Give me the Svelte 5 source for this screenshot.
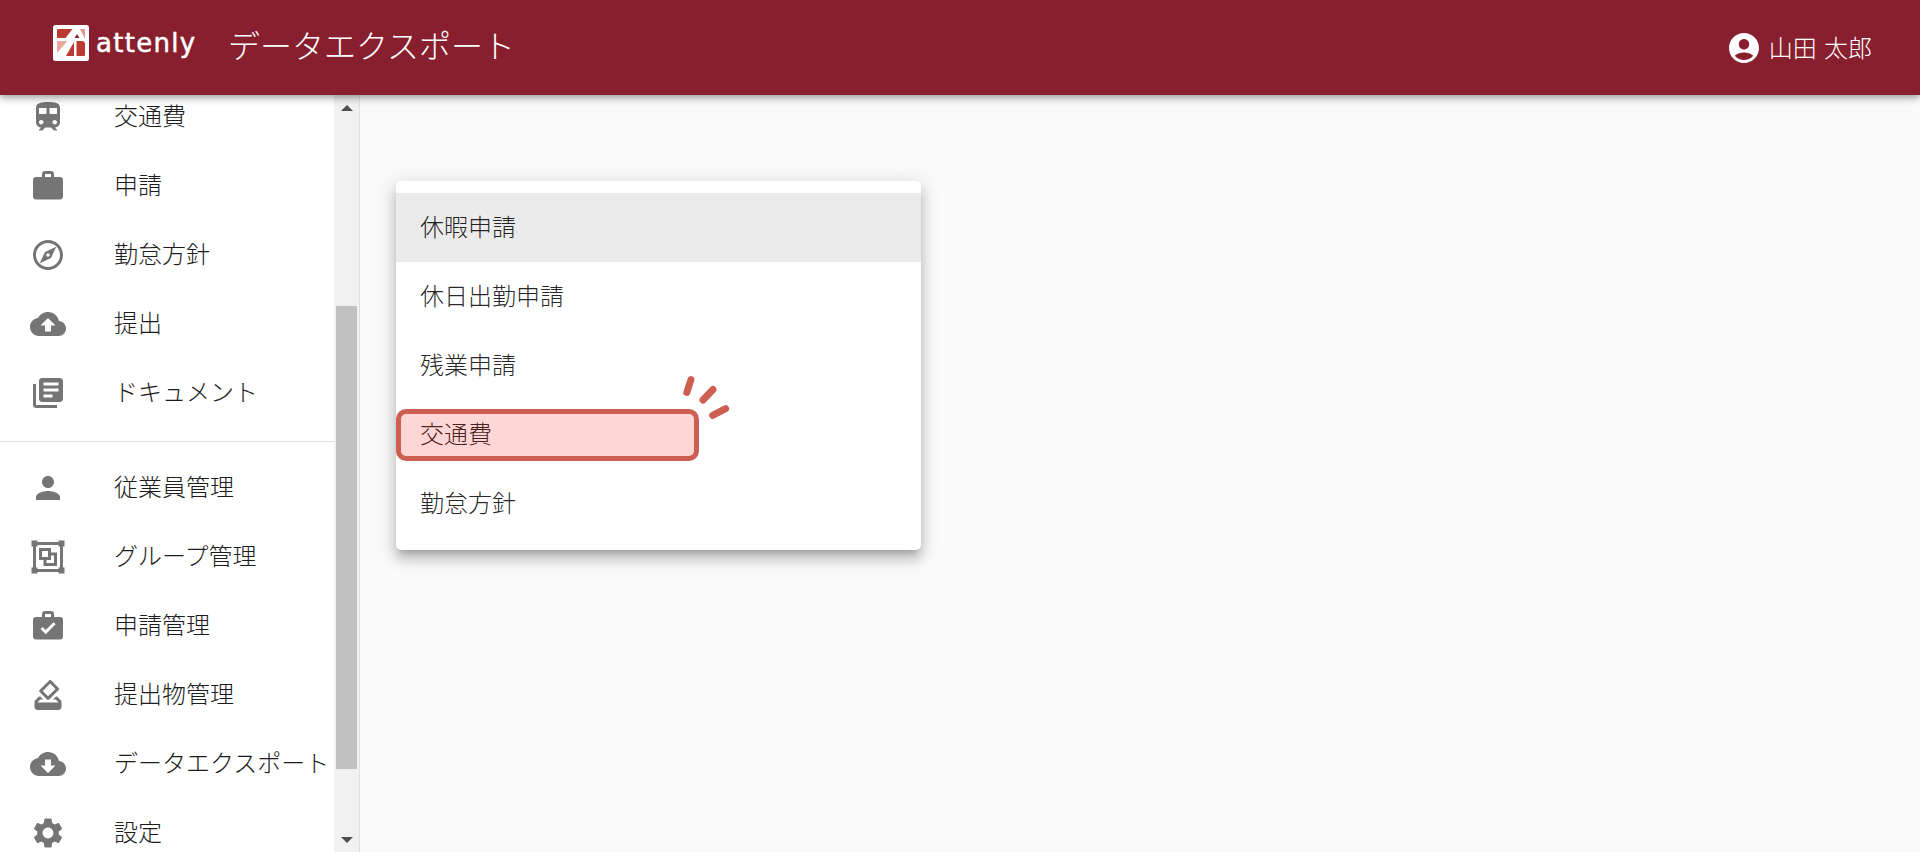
<script lang="ts">
	const topItems = [
		{ label: '交通費', d: 'M12 2c-4 0-8 .5-8 4v9.5C4 17.43 5.57 19 7.5 19L6 20.5v.5h2.23l2-2H14l2 2h2v-.5L16.5 19c1.93 0 3.5-1.57 3.5-3.5V6c0-3.5-3.58-4-8-4zM7.5 17c-.83 0-1.5-.67-1.5-1.5S6.67 14 7.5 14s1.5.67 1.5 1.5S8.33 17 7.5 17zm3.5-7H6V6h5v4zm2 0V6h5v4h-5zm3.5 7c-.83 0-1.5-.67-1.5-1.5s.67-1.5 1.5-1.5 1.5.67 1.5 1.5-.67 1.5-1.5 1.5z' },
		{ label: '申請', d: 'M20 6h-4V4c0-1.11-.89-2-2-2h-4c-1.11 0-2 .89-2 2v2H4c-1.11 0-1.99.89-1.99 2L2 19c0 1.11.89 2 2 2h16c1.11 0 2-.89 2-2V8c0-1.11-.89-2-2-2zm-6 0h-4V4h4v2z' },
		{ label: '勤怠方針', d: 'M12 2C6.48 2 2 6.48 2 12s4.48 10 10 10 10-4.48 10-10S17.52 2 12 2zm0 18c-4.41 0-8-3.59-8-8s3.59-8 8-8 8 3.59 8 8-3.59 8-8 8zm-5.5-2.5l7.51-3.49L17.5 6.5 9.99 9.99 6.5 17.5zm5.5-6.6c.61 0 1.1.49 1.1 1.1s-.49 1.1-1.1 1.1-1.1-.49-1.1-1.1.49-1.1 1.1-1.1z' },
		{ label: '提出', d: 'M19.35 10.04C18.67 6.59 15.64 4 12 4 9.11 4 6.6 5.64 5.35 8.04 2.34 8.36 0 10.91 0 14c0 3.31 2.69 6 6 6h13c2.76 0 5-2.24 5-5 0-2.64-2.05-4.78-4.65-4.96zM14 13v4h-4v-4H7l5-5 5 5h-3z' },
		{ label: 'ドキュメント', d: 'M4 6H2v14c0 1.1.9 2 2 2h14v-2H4V6zm16-4H8c-1.1 0-2 .9-2 2v12c0 1.1.9 2 2 2h12c1.1 0 2-.9 2-2V4c0-1.1-.9-2-2-2zm-1 9H9V9h10v2zm-4 4H9v-2h6v2zm4-8H9V5h10v2z' }
	];

	const adminItems = [
		{ label: '従業員管理', d: 'M12 12c2.21 0 4-1.79 4-4s-1.79-4-4-4-4 1.79-4 4 1.79 4 4 4zm0 2c-2.67 0-8 1.34-8 4v2h16v-2c0-2.66-5.33-4-8-4z' },
		{ label: 'グループ管理', d: 'M1,1V5H2V19H1V23H5V22H19V23H23V19H22V5H23V1H19V2H5V1M5,4H19V5H20V19H19V20H5V19H4V5H5M6,6V14H9V18H18V9H14V6M8,8H12V12H8M14,11H16V16H11V14H14Z' },
		{ label: '申請管理', d: 'M10,2H14A2,2 0 0,1 16,4V6H20A2,2 0 0,1 22,8V19A2,2 0 0,1 20,21H4C2.89,21 2,20.1 2,19V8C2,6.89 2.89,6 4,6H8V4C8,2.89 8.89,2 10,2M14,6V4H10V6H14M10.5,17.5L17.09,10.91L15.68,9.5L10.5,14.67L8.41,12.59L7,14L10.5,17.5Z' },
		{ label: '提出物管理', d: 'M18 13h-.68l-2 2h1.91L19 17H5l1.78-2h2.05l-2-2H6l-3 3v4c0 1.1.89 2 1.99 2H19c1.1 0 2-.89 2-2v-4l-3-3zm-1-5.05l-4.95 4.95-3.54-3.54 4.95-4.95L17 7.95zm-4.24-5.66L6.39 8.66c-.39.39-.39 1.02 0 1.41l4.95 4.95c.39.39 1.02.39 1.41 0l6.36-6.36c.39-.39.39-1.02 0-1.41L14.16 2.3c-.38-.4-1.01-.4-1.4-.01z' },
		{ label: 'データエクスポート', d: 'M19.35 10.04C18.67 6.59 15.64 4 12 4 9.11 4 6.6 5.64 5.35 8.04 2.34 8.36 0 10.91 0 14c0 3.31 2.69 6 6 6h13c2.76 0 5-2.24 5-5 0-2.64-2.05-4.78-4.65-4.96zM17 13l-5 5-5-5h3V9h4v4h3z' },
		{ label: '設定', d: 'M19.14 12.94c.04-.3.06-.61.06-.94 0-.32-.02-.64-.07-.94l2.03-1.58c.18-.14.23-.41.12-.61l-1.92-3.32c-.12-.22-.37-.29-.59-.22l-2.39.96c-.5-.38-1.03-.7-1.62-.94l-.36-2.54c-.04-.24-.24-.41-.48-.41h-3.84c-.24 0-.43.17-.47.41l-.36 2.54c-.59.24-1.13.57-1.62.94l-2.39-.96c-.22-.08-.47 0-.59.22L2.74 8.87c-.12.21-.08.47.12.61l2.03 1.58c-.05.3-.09.63-.09.94s.02.64.07.94l-2.03 1.58c-.18.14-.23.41-.12.61l1.92 3.32c.12.22.37.29.59.22l2.39-.96c.5.38 1.03.7 1.62.94l.36 2.54c.05.24.24.41.48.41h3.84c.24 0 .44-.17.47-.41l.36-2.54c.59-.24 1.13-.56 1.62-.94l2.39.96c.22.08.47 0 .59-.22l1.92-3.32c.12-.22.07-.47-.12-.61l-2.01-1.58zM12 15.6c-1.98 0-3.6-1.62-3.6-3.6s1.62-3.6 3.6-3.6 3.6 1.62 3.6 3.6-1.62 3.6-3.6 3.6z' }
	];

	const menuItems = ['休暇申請', '休日出勤申請', '残業申請', '交通費', '勤怠方針'];
</script>

<div class="page">
	<header class="app-bar">
		<div class="logo">
			<svg class="logo-mark" viewBox="0 0 36 36" aria-hidden="true">
				<rect width="36" height="36" rx="2.5" fill="#fff" />
				<path d="M4 5Q4 4 5 4H19.5L12.5 13H4Z" fill="#bb3a32" />
				<path d="M4 16H14.5L4 28Z" fill="#e8a79f" />
				<path d="M24 9L26.5 13H21.5Z" fill="#8a1f2e" />
				<path d="M27 4H31Q32 4 32 5V13H31.5Z" fill="#e3968d" />
				<path d="M23.5 16H29Q32 16 32 19V30Q32 31 31 31H23.5Z" fill="#bb3a32" />
				<path d="M21 17V31H13Z" fill="#bb3a32" />
			</svg>
			<span class="logo-text">attenly</span>
		</div>
		<h1 class="title">データエクスポート</h1>
		<div class="user">
			<svg class="icon" viewBox="0 0 24 24" aria-hidden="true">
				<path d="M12 2C6.48 2 2 6.48 2 12s4.48 10 10 10 10-4.48 10-10S17.52 2 12 2zm0 4c1.93 0 3.5 1.57 3.5 3.5S13.93 13 12 13s-3.5-1.57-3.5-3.5S10.07 6 12 6zm0 14c-2.03 0-4.43-.82-6.14-2.88C7.55 15.8 9.68 15 12 15s4.45.8 6.14 2.12C16.43 19.18 14.03 20 12 20z" />
			</svg>
			<span>山田 太郎</span>
		</div>
	</header>

	<div class="body">
		<aside class="sidebar">
			<nav class="nav">
				<ul class="nav-list first">
					{#each topItems as item}
						<li class="nav-item">
							<svg class="icon" viewBox="0 0 24 24" aria-hidden="true"><path d={item.d} /></svg>
							<span class="nav-label">{item.label}</span>
						</li>
					{/each}
				</ul>
				<hr class="divider" />
				<ul class="nav-list">
					{#each adminItems as item}
						<li class="nav-item">
							<svg class="icon" viewBox="0 0 24 24" aria-hidden="true"><path d={item.d} /></svg>
							<span class="nav-label">{item.label}</span>
						</li>
					{/each}
				</ul>
			</nav>
			<div class="scrollbar">
				<div class="arrow up"></div>
				<div class="thumb"></div>
				<div class="arrow down"></div>
			</div>
		</aside>

		<main class="main">
			<ul class="menu">
				{#each menuItems as item, i}
					<li class="menu-item" class:selected={i === 0}>
						<span class="menu-label">{item}</span>
						{#if item === '交通費'}
							<div class="callout"></div>
							<svg class="sparks" viewBox="0 0 50 50" aria-hidden="true">
								<path d="M8 4.5L3.8 17.5M30 14.5L20 25M42.6 33.7L29.7 40.3" />
							</svg>
						{/if}
					</li>
				{/each}
			</ul>
		</main>
	</div>
</div>

<style>
	:global(body) {
		margin: 0;
		background: #fafafa;
	}

	.page {
		display: flex;
		flex-direction: column;
		height: 852px;
		overflow: hidden;
		font-family: 'Noto Sans CJK JP', 'Noto Sans', sans-serif;
		font-weight: 300;
		color: rgba(0, 0, 0, 0.87);
	}

	.app-bar {
		position: relative;
		z-index: 2;
		display: flex;
		align-items: center;
		flex: none;
		height: 95px;
		padding: 0 48px 0 53px;
		box-sizing: border-box;
		background: #881f2e;
		color: #fff;
		box-shadow: 0 2px 5px -1px rgba(0, 0, 0, 0.2), 0 5px 6px 0 rgba(0, 0, 0, 0.14), 0 1px 12px 0 rgba(0, 0, 0, 0.12);
	}

	.logo {
		display: flex;
		align-items: center;
		gap: 7px;
		width: 175px;
		margin-top: -9px;
	}

	.logo-mark {
		flex: none;
		width: 36px;
		height: 36px;
	}

	.logo-text {
		font-family: 'DejaVu Sans', sans-serif;
		font-size: 26px;
		font-weight: 400;
		letter-spacing: 1.3px;
		line-height: 36px;
		-webkit-text-stroke: 0.5px #fff;
	}

	.title {
		margin: -8px 0 0;
		font-size: 32px;
		font-weight: 300;
		line-height: 1;
	}

	.user {
		display: flex;
		align-items: center;
		gap: 7px;
		margin-left: auto;
		font-size: 24px;
		font-weight: 300;
		word-spacing: 2px;
	}

	.user span {
		margin-bottom: 3px;
	}

	.user .icon {
		fill: #fff;
	}

	.icon {
		flex: none;
		width: 36px;
		height: 36px;
		fill: #757575;
	}

	.body {
		display: flex;
		flex: 1;
		min-height: 0;
	}

	.sidebar {
		display: flex;
		flex: none;
		width: 360px;
		box-sizing: border-box;
		background: #fff;
		border-right: 1px solid #e0e0e0;
	}

	.nav {
		flex: 1;
		overflow: hidden;
	}

	.nav-list {
		margin: 0;
		padding: 0;
		list-style: none;
	}

	.nav-list.first {
		margin-top: -13px;
	}

	.nav-item {
		display: flex;
		align-items: center;
		gap: 48px;
		height: 69px;
		padding-left: 30px;
		font-size: 24px;
		white-space: nowrap;
		color: #1c1c1c;
	}

	.nav-label {
		margin-bottom: 4px;
	}

	.divider {
		height: 1px;
		margin: 14px 0 11px;
		border: none;
		background: #e0e0e0;
	}

	.scrollbar {
		display: flex;
		flex-direction: column;
		align-items: center;
		flex: none;
		width: 25px;
		background: #f1f1f1;
	}

	.thumb {
		width: 21px;
		height: 463px;
		margin-top: 195px;
		background: #c1c1c1;
	}

	.arrow {
		width: 0;
		height: 0;
		border-left: 6px solid transparent;
		border-right: 6px solid transparent;
	}

	.arrow.up {
		margin-top: 10px;
		border-bottom: 6px solid #505050;
	}

	.arrow.down {
		margin-top: 68px;
		border-top: 6px solid #505050;
	}

	.main {
		flex: 1;
		padding: 86px 0 0 36px;
	}

	.menu {
		width: 525px;
		margin: 0;
		padding: 12px 0;
		box-sizing: border-box;
		list-style: none;
		background: #fff;
		border-radius: 5px;
		box-shadow: 0 6px 6px -4px rgba(0, 0, 0, 0.2), 0 10px 12px 1px rgba(0, 0, 0, 0.14), 0 4px 18px 3px rgba(0, 0, 0, 0.12);
	}

	.menu-item {
		position: relative;
		display: flex;
		align-items: center;
		height: 69px;
		padding-left: 24px;
		font-size: 24px;
	}

	.menu-label {
		margin-bottom: 5px;
	}

	.menu-item.selected {
		background: #ebebeb;
	}

	.callout {
		position: absolute;
		top: 9px;
		left: 0;
		width: 303px;
		height: 52px;
		box-sizing: border-box;
		background: rgba(255, 0, 0, 0.16);
		border: 5.5px solid #cd5e52;
		border-radius: 10px;
	}

	.sparks {
		position: absolute;
		top: -25px;
		left: 287px;
		width: 50px;
		height: 50px;
		fill: none;
		stroke: #cd5e52;
		stroke-width: 7;
		stroke-linecap: round;
	}
</style>
